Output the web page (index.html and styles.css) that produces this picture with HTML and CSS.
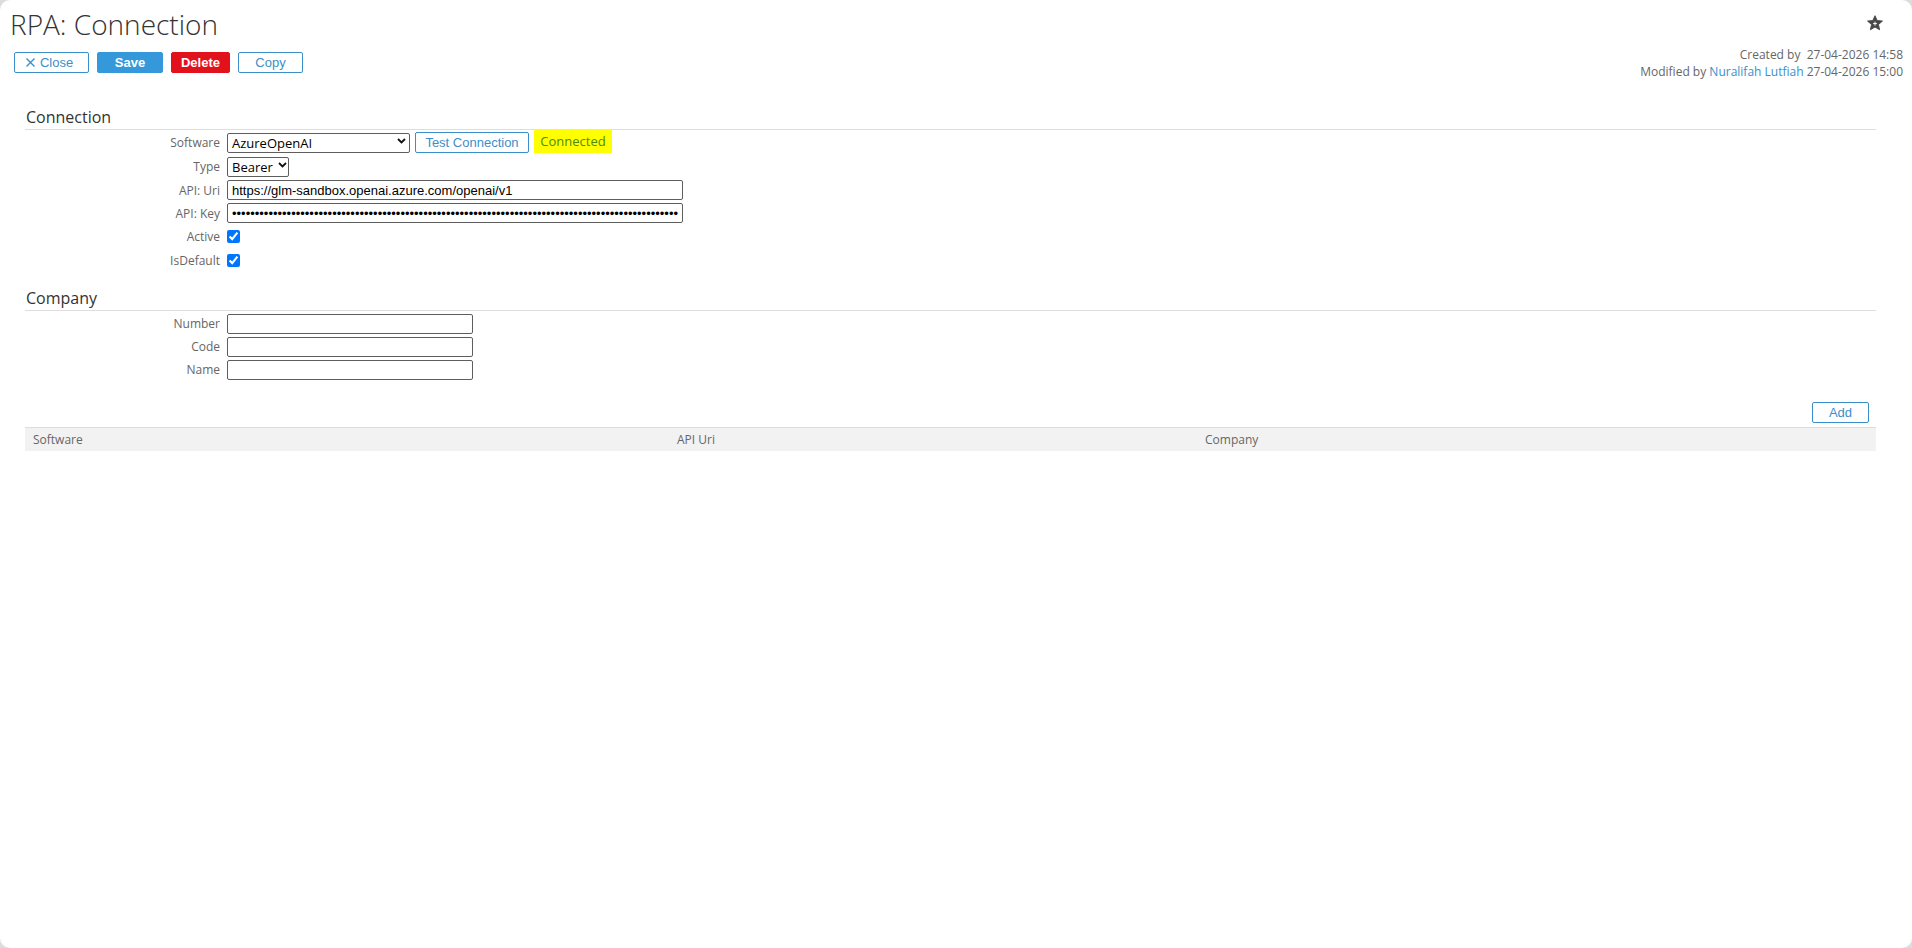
FILE: index.html
```html
<!DOCTYPE html>
<html lang="en">
<head>
<meta charset="utf-8">
<title>RPA: Connection</title>
<link rel="stylesheet" href="styles.css">
</head>
<body>
<div class="page">
  <header class="topbar">
    <div class="title-block">
      <h1 class="page-title">RPA: Connection</h1>
      <div class="actions">
        <button class="btn btn-outline btn-close" type="button"><svg class="x-icon" width="9" height="9" viewBox="0 0 9 9"><path d="M0.5 0.5 L8.5 8.5 M8.5 0.5 L0.5 8.5" stroke="#3a8fcb" stroke-width="1.4" fill="none"/></svg>Close</button>
        <button class="btn btn-primary btn-save" type="button">Save</button>
        <button class="btn btn-danger btn-delete" type="button">Delete</button>
        <button class="btn btn-outline btn-copy" type="button">Copy</button>
      </div>
    </div>
    <div class="meta-block">
      <div class="star-row">
        <svg class="star" width="18" height="18" viewBox="0 0 24 24"><path d="M12 2.2l2.9 6.5 7.1.7-5.4 4.7 1.6 7-6.2-3.7-6.2 3.7 1.6-7L2 9.4l7.1-.7z" fill="#474747" stroke="#474747" stroke-width="1.2" stroke-linejoin="round"/><path d="M12 10.2v5.2M9.4 12.8h5.2" stroke="#fff" stroke-width="1.3"/></svg>
      </div>
      <div class="meta">
        <div class="meta-line">Created by&nbsp; 27-04-2026 14:58</div>
        <div class="meta-line">Modified by <a class="meta-link" href="#">Nuralifah Lutfiah</a> 27-04-2026 15:00</div>
      </div>
    </div>
  </header>

  <main class="content">
    <section class="section section-connection">
      <h2 class="section-title">Connection</h2>
      <div class="form">
        <div class="row row-24">
          <label class="lbl">Software</label>
          <div class="field">
            <span class="select-wrap sel-software">
              <select class="sel"><option>AzureOpenAI</option></select>
              <svg class="chev" width="9" height="6" viewBox="0 0 9 6"><path d="M1 1 L4.5 4.5 L8 1" stroke="#111" stroke-width="1.8" fill="none"/></svg>
            </span>
            <button class="btn btn-outline btn-test" type="button">Test Connection</button>
            <span class="status-ok">Connected</span>
          </div>
        </div>
        <div class="row row-24">
          <label class="lbl">Type</label>
          <div class="field">
            <span class="select-wrap sel-type">
              <select class="sel"><option>Bearer</option></select>
              <svg class="chev" width="9" height="6" viewBox="0 0 9 6"><path d="M1 1 L4.5 4.5 L8 1" stroke="#111" stroke-width="1.8" fill="none"/></svg>
            </span>
          </div>
        </div>
        <div class="row row-24">
          <label class="lbl">API: Uri</label>
          <div class="field"><input class="inp inp-wide" type="text" value="https://glm-sandbox.openai.azure.com/openai/v1"></div>
        </div>
        <div class="row row-22">
          <label class="lbl">API: Key</label>
          <div class="field"><input class="inp inp-wide" type="password" value="xxxxxxxxxxxxxxxxxxxxxxxxxxxxxxxxxxxxxxxxxxxxxxxxxxxxxxxxxxxxxxxxxxxxxxxxxxxxxxxxxxxxxxxxxxxxxxxxxx"></div>
        </div>
        <div class="row row-24">
          <label class="lbl">Active</label>
          <div class="field"><input class="chk" type="checkbox" checked></div>
        </div>
        <div class="row row-24">
          <label class="lbl">IsDefault</label>
          <div class="field"><input class="chk" type="checkbox" checked></div>
        </div>
      </div>
    </section>

    <section class="section section-company">
      <h2 class="section-title">Company</h2>
      <div class="form form-company">
        <div class="row row-23">
          <label class="lbl">Number</label>
          <div class="field"><input class="inp inp-mid" type="text"></div>
        </div>
        <div class="row row-23">
          <label class="lbl">Code</label>
          <div class="field"><input class="inp inp-mid" type="text"></div>
        </div>
        <div class="row row-23">
          <label class="lbl">Name</label>
          <div class="field"><input class="inp inp-mid" type="text"></div>
        </div>
      </div>
    </section>

    <section class="grid-section">
      <div class="grid-tools">
        <button class="btn btn-outline btn-add" type="button">Add</button>
      </div>
      <div class="grid-head">
        <div class="gh gh-software">Software</div>
        <div class="gh gh-uri">API Uri</div>
        <div class="gh gh-company">Company</div>
      </div>
    </section>
  </main>
</div>
</body>
</html>
```

FILE: styles.css
```css
html, body {
  margin: 0;
  padding: 0;
}
body {
  background: #dcdcdc;
  font-family: "Open Sans", "Liberation Sans", sans-serif;
  color: #333;
}
.page {
  background: #fff;
  border-radius: 10px;
  height: 948px;
  box-sizing: border-box;
  padding-top: 6px;
  overflow: hidden;
}

/* ---------- top bar ---------- */
.topbar {
  display: flex;
  justify-content: space-between;
  align-items: flex-start;
  height: 74px;
}
.title-block {
  padding-left: 10px;
}
.page-title {
  margin: 0;
  font-family: "Open Sans", sans-serif;
  font-weight: 300;
  font-size: 28px;
  line-height: 36px;
  color: #333;
}
.actions {
  display: flex;
  gap: 8px;
  margin-top: 10px;
  padding-left: 4px;
}
.btn {
  box-sizing: border-box;
  height: 21px;
  border-radius: 2px;
  font-family: "Liberation Sans", Arial, sans-serif;
  font-size: 13px;
  line-height: 19px;
  padding: 0;
  cursor: pointer;
  display: inline-flex;
  align-items: center;
  justify-content: center;
}
.btn-outline {
  background: #fff;
  border: 1px solid #3a8fcb;
  color: #3a8fcb;
}
.btn-primary {
  background: #3498db;
  border: 1px solid #3498db;
  color: #fff;
  font-weight: bold;
}
.btn-danger {
  background: #e2121c;
  border: 1px solid #e2121c;
  color: #fff;
  font-weight: bold;
}
.btn-close { width: 75px; }
.btn-save { width: 66px; }
.btn-delete { width: 59px; }
.btn-copy { width: 65px; }
.x-icon {
  margin-right: 5px;
  margin-left: -4px;
}

.meta-block {
  display: flex;
  flex-direction: column;
  align-items: flex-end;
  padding-right: 9px;
}
.star-row {
  padding-top: 8px;
  padding-right: 19px;
  height: 18px;
}
.star { display: block; }
.meta {
  margin-top: 14px;
  text-align: right;
  font-size: 12px;
  line-height: 17px;
  color: #666;
}
.meta-line { white-space: nowrap; }
.meta-link {
  color: #3a8fcb;
  text-decoration: none;
}

/* ---------- content ---------- */
.content {
  padding-left: 25px;
  padding-right: 36px;
}
.section-connection { margin-top: 27px; }
.section-company { margin-top: 16px; }
.section-title {
  margin: 0;
  font-size: 16px;
  font-weight: 400;
  line-height: 20px;
  color: #333;
  padding: 0 0 2px 1px;
  border-bottom: 1px solid #dedede;
}
.form {
  display: flex;
  flex-direction: column;
}
.form-company { padding-top: 1px; }
.row {
  display: flex;
  align-items: center;
}
.row-24 { height: 24px; }
.row-23 { height: 23px; }
.row-22 { height: 22px; }
.lbl {
  width: 195px;
  text-align: right;
  font-size: 12px;
  color: #666;
  flex: none;
}
.field {
  margin-left: 7px;
  display: flex;
  align-items: center;
}
.select-wrap {
  position: relative;
  display: inline-block;
}
.sel {
  appearance: none;
  -webkit-appearance: none;
  box-sizing: border-box;
  height: 20px;
  border: 1px solid #5e5e5e;
  border-radius: 2px;
  background: #fff;
  font-family: "Open Sans", sans-serif;
  font-size: 13px;
  color: #000;
  padding: 0 0 0 4px;
  margin: 0;
  line-height: 18px;
}
.sel-software .sel { width: 183px; }
.sel-type .sel { width: 62px; }
.chev {
  position: absolute;
  top: 7px;
  right: 4px;
  pointer-events: none;
}
.sel-type .chev { right: 2px; }
.btn-test {
  width: 114px;
  margin-left: 5px;
}
.status-ok {
  margin-left: 5px;
  margin-top: -2px;
  background: #ffff00;
  color: #4b8c0a;
  font-size: 13px;
  height: 24px;
  line-height: 24px;
  width: 78px;
  text-align: center;
  box-sizing: border-box;
}
.inp {
  box-sizing: border-box;
  height: 20px;
  border: 1px solid #5e5e5e;
  border-radius: 2px;
  font-family: "Liberation Sans", Arial, sans-serif;
  font-size: 13px;
  color: #000;
  padding: 0 4px;
  margin: 0;
  background: #fff;
}
.inp-wide { width: 456px; }
.inp-mid { width: 246px; }
.chk {
  width: 13px;
  height: 13px;
  margin: 0;
  accent-color: #0075ff;
}

/* ---------- grid ---------- */
.grid-section { margin-top: 21px; }
.grid-tools {
  display: flex;
  justify-content: flex-end;
  padding-right: 7px;
}
.btn-add { width: 57px; }
.grid-head {
  margin-top: 4px;
  display: flex;
  height: 24px;
  box-sizing: border-box;
  background: #f2f2f2;
  border-top: 1px solid #dddddd;
  align-items: center;
  font-size: 12px;
  color: #666;
}
.gh {
  padding-left: 8px;
  box-sizing: border-box;
}
.gh-software { width: 644px; }
.gh-uri { width: 528px; }
.gh-company { flex: 1; }
```
